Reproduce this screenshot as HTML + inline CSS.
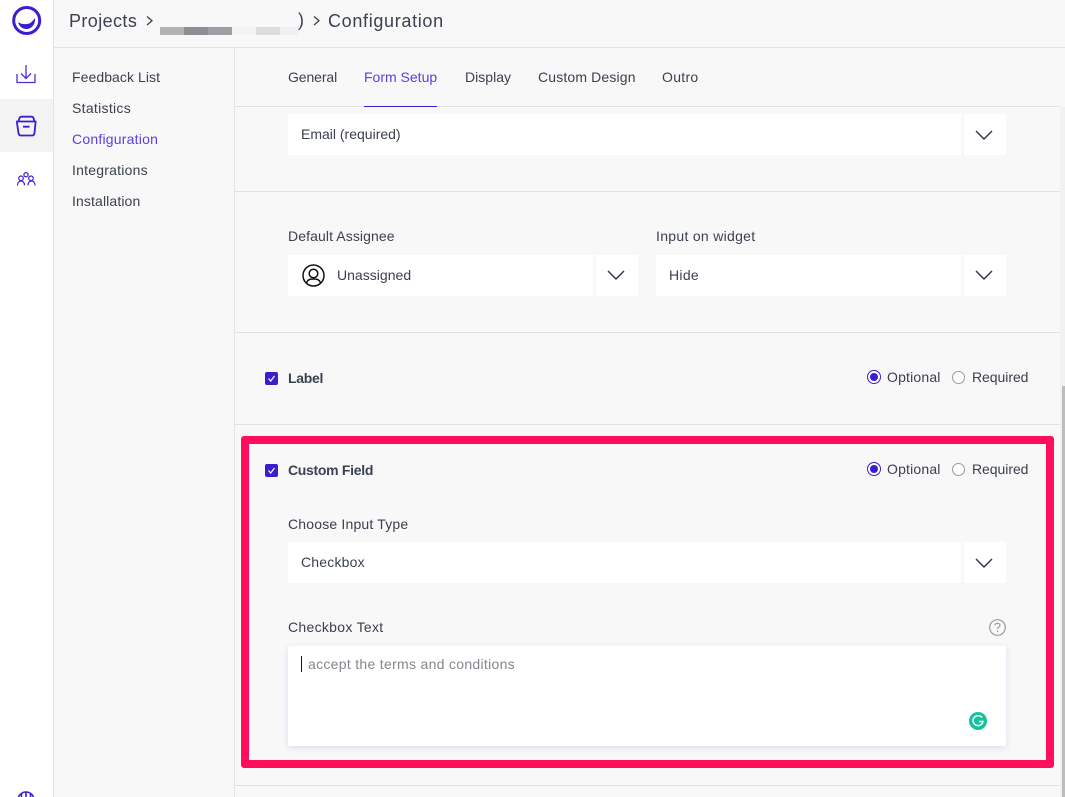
<!DOCTYPE html>
<html><head><meta charset="utf-8"><title>Configuration</title>
<style>
html,body{margin:0;padding:0}
body{width:1065px;height:797px;position:relative;overflow:hidden;background:#f8f8f8;font-family:"Liberation Sans",sans-serif;color:#3b4150;font-size:14px}
.a{position:absolute}
.t{position:absolute;white-space:nowrap;line-height:20px;letter-spacing:0}
.w{position:absolute;background:#fff}
.l{position:absolute;background:#e2e2e6;height:1px;left:235px;width:825px}
.p{color:#5a3fe0}
.cb{position:absolute;width:13px;height:13px;background:#3a1fd0;border-radius:2px}
.r{position:absolute;width:13px;height:13px;box-sizing:border-box;border-radius:50%;background:#fff;border:1px solid #9a9aa2}
.r.on{width:14px;height:14px;border:1px solid #3a1fd0;background:#fff}
.r.on:after{content:"";position:absolute;left:2px;top:2px;width:8px;height:8px;border-radius:50%;background:#3a1fd0}
</style></head><body>
<div class="a" style="left:0;top:0;width:53px;height:797px;background:#fff"></div>
<div class="a" style="left:53px;top:0;width:1px;height:797px;background:#e4e4e4"></div>
<div class="a" style="left:0;top:99px;width:53px;height:53px;background:#f3f3f3"></div>
<div class="a" style="left:54px;top:47px;width:1011px;height:1px;background:#e4e4e4"></div>
<div class="a" style="left:234px;top:48px;width:1px;height:749px;background:#e4e4e4"></div>

<svg class="a" style="left:0;top:0" width="53" height="200" viewBox="0 0 53 200" fill="none" stroke="#3a1fd0">
<circle cx="26.700" cy="20.500" r="13" stroke-width="3"/>
<path d="M18 22C21 24.500 28 25 31 22.500C32.500 21.200 33.500 20 35 18C35.500 24 32 29 26.500 29C22 29 19 26 18 22Z" fill="#3a1fd0" stroke="none"/>
<path d="M17 74V82.500H35V74M26 65V78M21 73.500L26 78.500L31 73.500" stroke-width="1.300" stroke="#4a30dc"/>
<path d="M18.500 121.500L19.500 118C20 117 20.500 116.700 21.500 116.700H31.500C32.500 116.700 33 117 33.500 118L34.500 121.500M17 121.500H35.500V123L34.500 133C34.300 134.800 33.400 135.500 32 135.500H21C19.600 135.500 18.700 134.800 18.500 133L17 123ZM23 126.700H29.500" stroke-width="1.800"/>
<circle cx="26" cy="174.700" r="2.100" stroke-width="1.200"/><circle cx="21" cy="178.300" r="2.300" stroke-width="1.200"/><circle cx="31" cy="178.300" r="2.300" stroke-width="1.200"/>
<path d="M17.500 185.500C17.500 182.700 19 181 21 181C23 181 24.500 182.700 24.500 185.300M35 185.500C35 182.700 33.500 181 31.500 181C29.500 181 28 182.700 28 185.300" stroke-width="1.200"/>
</svg>
<svg class="a" style="left:0;top:785px" width="53" height="12" viewBox="0 0 53 12" fill="none" stroke="#3a1fd0" stroke-width="1.600">
<circle cx="26" cy="15" r="8"/><path d="M26 7V20M21.500 9V16M30.500 9V16"/>
</svg>

<div class="t" style="left:69px;top:11px;font-size:18px;letter-spacing:.4px">Projects</div>
<svg class="a" style="left:145px;top:15px" width="10" height="12" fill="none" stroke="#3b4150" stroke-width="1.300"><path d="M2 1.500L7 5.800L2 10"/></svg>
<div class="a" style="left:160px;top:27px;width:24px;height:8px;background:#b1b3b7"></div>
<div class="a" style="left:184px;top:27px;width:24px;height:8px;background:#8b8e93"></div>
<div class="a" style="left:208px;top:27px;width:24px;height:8px;background:#9ea0a5"></div>
<div class="a" style="left:232px;top:27px;width:24px;height:8px;background:#f3f3f4"></div>
<div class="a" style="left:256px;top:27px;width:24px;height:8px;background:#dcdddf"></div>
<div class="a" style="left:280px;top:27px;width:19px;height:8px;background:#f0f0f2"></div>
<div class="t" style="left:298px;top:10px;font-size:18px">)</div>
<svg class="a" style="left:312px;top:15px" width="10" height="12" fill="none" stroke="#3b4150" stroke-width="1.300"><path d="M2 1.500L7 5.800L2 10"/></svg>
<div class="t" style="left:328px;top:11px;font-size:18px;letter-spacing:.67px">Configuration</div>

<div class="t" style="left:72px;top:67px;letter-spacing:.07px">Feedback List</div>
<div class="t" style="left:72px;top:98px;letter-spacing:.3px">Statistics</div>
<div class="t p" style="left:72px;top:129px;letter-spacing:.22px">Configuration</div>
<div class="t" style="left:72px;top:160px;letter-spacing:.22px">Integrations</div>
<div class="t" style="left:72px;top:191px;letter-spacing:.12px">Installation</div>

<div class="t" style="left:288px;top:67px;letter-spacing:-.1px">General</div>
<div class="t p" style="left:364px;top:67px;letter-spacing:0">Form Setup</div>
<div class="t" style="left:465px;top:67px;letter-spacing:.02px">Display</div>
<div class="t" style="left:538px;top:67px;letter-spacing:.15px">Custom Design</div>
<div class="t" style="left:662px;top:67px;letter-spacing:.3px">Outro</div>
<div class="l" style="top:106px;height:1px;background:#e2e2e2"></div>
<div class="a" style="left:364px;top:106px;width:73px;height:1px;background:#3a1fd0"></div>

<div class="w" style="left:288px;top:114px;width:673px;height:41px"></div>
<div class="w" style="left:964px;top:114px;width:42px;height:41px"></div>
<div class="t" style="left:301px;top:124px;letter-spacing:0">Email (required)</div>
<svg class="a" style="left:975px;top:130px" width="18" height="11" fill="none" stroke="#2d3342" stroke-width="1.400"><path d="M1 1L9 9L17 1"/></svg>
<div class="l" style="top:191px"></div>

<div class="t" style="left:288px;top:226px;letter-spacing:.1px">Default Assignee</div>
<div class="w" style="left:288px;top:255px;width:305px;height:41px"></div>
<div class="w" style="left:596px;top:255px;width:42px;height:41px"></div>
<svg class="a" style="left:302px;top:264px" width="24" height="24" fill="none" stroke="#111" stroke-width="1.500"><circle cx="11.500" cy="11.500" r="10.500"/><circle cx="11.500" cy="9.500" r="4.300"/><path d="M4.500 19C5.500 15.500 8 15 11.500 15C15 15 17.500 15.500 18.500 19"/></svg>
<div class="t" style="left:337px;top:265px;letter-spacing:.02px">Unassigned</div>
<svg class="a" style="left:607px;top:270px" width="18" height="11" fill="none" stroke="#2d3342" stroke-width="1.400"><path d="M1 1L9 9L17 1"/></svg>

<div class="t" style="left:656px;top:226px;letter-spacing:.3px">Input on widget</div>
<div class="w" style="left:656px;top:255px;width:305px;height:41px"></div>
<div class="w" style="left:964px;top:255px;width:42px;height:41px"></div>
<div class="t" style="left:669px;top:265px;letter-spacing:.3px">Hide</div>
<svg class="a" style="left:975px;top:270px" width="18" height="11" fill="none" stroke="#2d3342" stroke-width="1.400"><path d="M1 1L9 9L17 1"/></svg>
<div class="l" style="top:332px"></div>

<div class="cb" style="left:265px;top:372px"><svg width="13" height="13" fill="none" stroke="#fff" stroke-width="1.200"><path d="M3.500 6.500L5.700 9L9.500 4"/></svg></div>
<div class="t" style="left:288px;top:368px;font-weight:700;letter-spacing:-.3px">Label</div>
<div class="r on" style="left:867px;top:370px"></div>
<div class="t" style="left:887px;top:367px;letter-spacing:.18px">Optional</div>
<div class="r" style="left:952px;top:371px"></div>
<div class="t" style="left:972px;top:367px;letter-spacing:-.05px">Required</div>
<div class="l" style="top:424px"></div>

<div class="a" style="left:241px;top:436px;width:813px;height:332px;box-sizing:border-box;border:8px solid #ff0f5b;border-radius:3px"></div>
<div class="cb" style="left:265px;top:464px"><svg width="13" height="13" fill="none" stroke="#fff" stroke-width="1.200"><path d="M3.500 6.500L5.700 9L9.500 4"/></svg></div>
<div class="t" style="left:288px;top:460px;font-weight:700;letter-spacing:-.3px">Custom Field</div>
<div class="r on" style="left:867px;top:462px"></div>
<div class="t" style="left:887px;top:459px;letter-spacing:.18px">Optional</div>
<div class="r" style="left:952px;top:463px"></div>
<div class="t" style="left:972px;top:459px;letter-spacing:-.05px">Required</div>

<div class="t" style="left:288px;top:514px;letter-spacing:.18px">Choose Input Type</div>
<div class="w" style="left:288px;top:542px;width:673px;height:41px"></div>
<div class="w" style="left:964px;top:542px;width:42px;height:41px"></div>
<div class="t" style="left:301px;top:552px;letter-spacing:.2px">Checkbox</div>
<svg class="a" style="left:975px;top:558px" width="18" height="11" fill="none" stroke="#2d3342" stroke-width="1.400"><path d="M1 1L9 9L17 1"/></svg>

<div class="t" style="left:288px;top:617px;letter-spacing:.3px">Checkbox Text</div>
<svg class="a" style="left:989px;top:619px" width="17" height="17" fill="none" stroke="#9a9aa2" stroke-width="1.200"><circle cx="8.500" cy="8.500" r="7.800"/><path d="M6 6.500C6 5 7 4.300 8.500 4.300C10 4.300 11 5.200 11 6.400C11 8 8.500 8 8.500 10"/><path d="M8.500 11.500V13"/></svg>
<div class="w" style="left:288px;top:646px;width:718px;height:100px;border-radius:2px;box-shadow:0 2px 7px rgba(90,70,220,.16)"></div>
<div class="a" style="left:301px;top:656px;width:1px;height:16px;background:#111"></div>
<div class="t" style="left:308px;top:654px;color:#85878d;letter-spacing:.3px">accept the terms and conditions</div>
<svg class="a" style="left:969px;top:712px" width="18" height="18"><circle cx="9" cy="9" r="9" fill="#15c39a"/><path d="M13 5.500A5 5 0 1 0 14 9.500H10" fill="none" stroke="#fff" stroke-width="1.500"/></svg>
<div class="l" style="top:785px"></div>

<div class="a" style="left:1060px;top:107px;width:5px;height:690px;background:#f1f1f1"></div>
<div class="a" style="left:1062px;top:386px;width:3px;height:411px;background:#bdbdbd"></div>
</body></html>
